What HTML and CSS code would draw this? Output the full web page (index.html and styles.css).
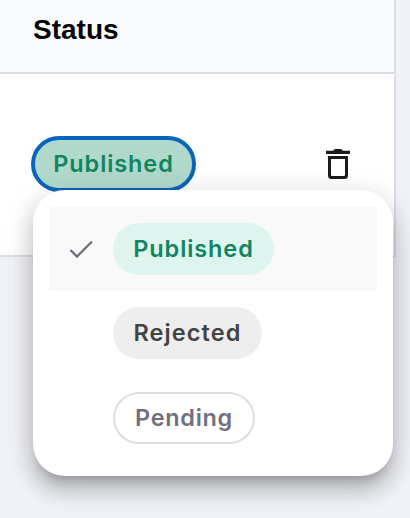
FILE: index.html
```html
<!DOCTYPE html>
<html lang="en">
<head>
<meta charset="utf-8">
<title>Status</title>
<link rel="stylesheet" href="styles.css">
</head>
<body>
<main class="table">
  <header class="table-head">Status</header>
  <section class="row">
    <button class="chip selected"><span class="label published-text">Published</span></button>
    <svg class="trash" width="26" height="32" viewBox="0 0 26 32"><path d="M1 1.7h7Q9 0 10.5 0h5Q17 0 18 1.7h7V5H1zM3 7h20v19.5q0 3.5-3.5 3.5h-13Q3 30 3 26.500zM6 10v16q0 1 1 1h12q1 0 1-1V10z" fill="#1b1b1c" fill-rule="evenodd"/></svg>
  </section>
</main>
<ul class="menu">
  <li class="option active">
    <svg class="check" width="24" height="20" viewBox="0 0 24 20"><path d="M1.500 11L8 17.500L23 2.500" fill="none" stroke="#6f6e79" stroke-width="2.3"/></svg>
    <span class="chip published"><span class="label published-text">Published</span></span>
  </li>
  <li class="option"><span class="chip rejected"><span class="label rejected-text">Rejected</span></span></li>
  <li class="option"><span class="chip pending"><span class="label pending-text">Pending</span></span></li>
</ul>
</body>
</html>
```
FILE: styles.css
```css
* { box-sizing: border-box; }
body {
  margin: 0;
  height: 518px;
  overflow: hidden;
  background: #f0f2f7;
  font-family: "Liberation Sans", Arial, sans-serif;
}
.table {
  width: 396px;
  height: 257px;
  background: #fff;
  border-right: 2px solid #dcdee2;
  border-bottom: 2px solid #dcdee2;
}
.table-head {
  height: 74px;
  padding: 14px 0 0 33px;
  background: #f8fafc;
  border-bottom: 2px solid #dadce0;
  color: #050506;
  font-size: 28px;
  line-height: 32px;
  font-weight: 700;
}
.row {
  display: flex;
  justify-content: space-between;
  padding: 62px 43px 0 31px;
}
.trash { margin-top: 13px; }
.chip {
  display: flex;
  align-items: center;
  justify-content: center;
  height: 52px;
  border: 0;
  border-radius: 28px;
  padding: 0;
  font-family: Inter, sans-serif;
  font-size: 23.5px;
  line-height: 30px;
  font-weight: 600;
}
.label { white-space: nowrap; }
.selected {
  width: 165px;
  height: 56px;
  background: #b0d9cc;
  border: 4px solid #0864bd;
}
.published { width: 161px; background: #def4ef; }
.rejected { width: 149px; background: #eee; }
.pending { width: 142px; border: 2px solid #dedede; background: #fff; }
.published-text { color: #118461; letter-spacing: 0.9px; }
.rejected-text { color: #434343; letter-spacing: 1.1px; }
.pending-text { color: #71707f; letter-spacing: 0.7px; }
.menu {
  position: absolute;
  left: 33px;
  top: 190px;
  width: 360px;
  height: 286px;
  margin: 0;
  padding: 17px 16px;
  list-style: none;
  background: #fff;
  border-radius: 32px;
  box-shadow: 0 10px 10px -6px rgba(0, 0, 0, .2), 0 16px 20px 2px rgba(0, 0, 0, .14), 0 6px 28px 4px rgba(0, 0, 0, .12);
}
.option {
  display: flex;
  align-items: center;
  height: 84px;
  padding-left: 64px;
}
.option:last-child { margin-top: 1px; }
.active { padding-left: 20px; gap: 20px; background: #f9f9f9; }
```
